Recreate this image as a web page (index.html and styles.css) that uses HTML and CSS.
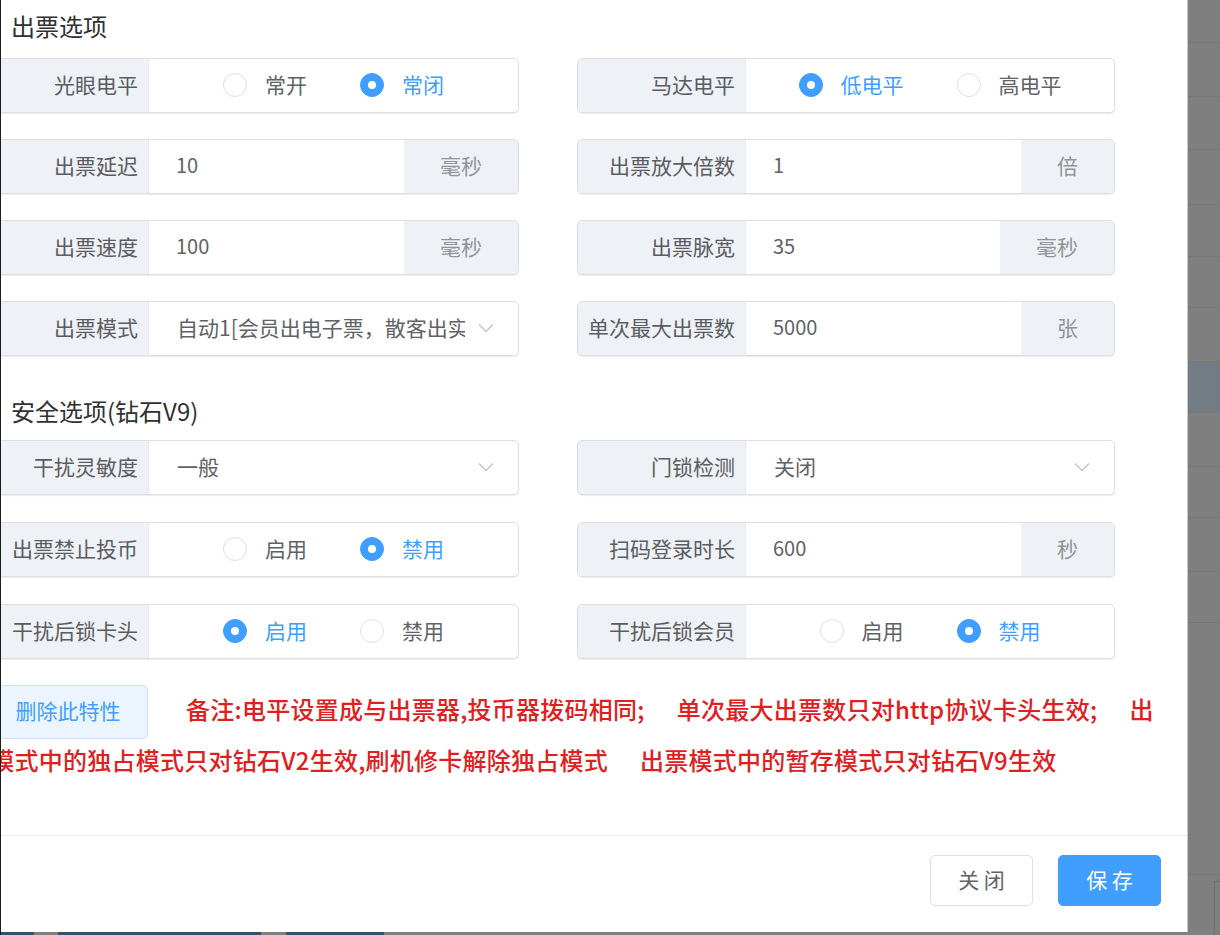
FILE: index.html
```html
<!DOCTYPE html>
<html lang="zh-CN">
<head>
<meta charset="utf-8">
<title>出票选项</title>
<link rel="stylesheet" href="styles.css">
</head>
<body>
<div class="screen">
  <div class="left">
    <div class="dialog">
      <div class="dialog-body">
        <h3 class="section-title">出票选项</h3>
        <div class="form-grid grid-a">
          <div class="field">
            <div class="label">光眼电平</div>
            <div class="control radios">
              <span class="radio"><span class="dot"></span><span>常开</span></span>
              <span class="radio checked"><span class="dot"></span><span>常闭</span></span>
            </div>
          </div>
          <div class="field">
            <div class="label">马达电平</div>
            <div class="control radios">
              <span class="radio checked"><span class="dot"></span><span>低电平</span></span>
              <span class="radio"><span class="dot"></span><span>高电平</span></span>
            </div>
          </div>
          <div class="field">
            <div class="label">出票延迟</div>
            <div class="control input">10</div>
            <div class="append">毫秒</div>
          </div>
          <div class="field">
            <div class="label">出票放大倍数</div>
            <div class="control input">1</div>
            <div class="append">倍</div>
          </div>
          <div class="field">
            <div class="label">出票速度</div>
            <div class="control input">100</div>
            <div class="append">毫秒</div>
          </div>
          <div class="field">
            <div class="label">出票脉宽</div>
            <div class="control input">35</div>
            <div class="append">毫秒</div>
          </div>
          <div class="field">
            <div class="label">出票模式</div>
            <div class="control select">
              <span class="select-text">自动1[会员出电子票，散客出实体票]</span>
              <svg class="chevron" width="16" height="10" viewBox="0 0 16 10"><polyline points="1,1.5 8,8.5 15,1.5" fill="none" stroke="#c0c4cc" stroke-width="1.3"/></svg>
            </div>
          </div>
          <div class="field">
            <div class="label">单次最大出票数</div>
            <div class="control input">5000</div>
            <div class="append">张</div>
          </div>
        </div>

        <h3 class="section-title second">安全选项(钻石V9)</h3>
        <div class="form-grid grid-b">
          <div class="field">
            <div class="label">干扰灵敏度</div>
            <div class="control select">
              <span class="select-text">一般</span>
              <svg class="chevron" width="16" height="10" viewBox="0 0 16 10"><polyline points="1,1.5 8,8.5 15,1.5" fill="none" stroke="#c0c4cc" stroke-width="1.3"/></svg>
            </div>
          </div>
          <div class="field">
            <div class="label">门锁检测</div>
            <div class="control select">
              <span class="select-text">关闭</span>
              <svg class="chevron" width="16" height="10" viewBox="0 0 16 10"><polyline points="1,1.5 8,8.5 15,1.5" fill="none" stroke="#c0c4cc" stroke-width="1.3"/></svg>
            </div>
          </div>
          <div class="field">
            <div class="label">出票禁止投币</div>
            <div class="control radios">
              <span class="radio"><span class="dot"></span><span>启用</span></span>
              <span class="radio checked"><span class="dot"></span><span>禁用</span></span>
            </div>
          </div>
          <div class="field">
            <div class="label">扫码登录时长</div>
            <div class="control input">600</div>
            <div class="append">秒</div>
          </div>
          <div class="field">
            <div class="label">干扰后锁卡头</div>
            <div class="control radios">
              <span class="radio checked"><span class="dot"></span><span>启用</span></span>
              <span class="radio"><span class="dot"></span><span>禁用</span></span>
            </div>
          </div>
          <div class="field">
            <div class="label">干扰后锁会员</div>
            <div class="control radios">
              <span class="radio"><span class="dot"></span><span>启用</span></span>
              <span class="radio checked"><span class="dot"></span><span>禁用</span></span>
            </div>
          </div>
        </div>

        <div class="note"><button class="btn-plain-primary">删除此特性</button><span class="note-text">备注:电平设置成与出票器,投币器拨码相同;<span class="sp"></span>单次最大出票数只对http协议卡头生效;<span class="sp"></span>出票模式中的独占模式只对钻石V2生效,刷机修卡解除独占模式<span class="sp"></span>出票模式中的暂存模式只对钻石V9生效</span></div>
      </div>
      <div class="dialog-footer">
        <button class="btn btn-default">关 闭</button>
        <button class="btn btn-primary">保 存</button>
      </div>
    </div>
    <div class="strip"></div>
  </div>
  <div class="backdrop">
    <div class="bg-row r43"></div>
    <div class="bg-row r54"></div>
    <div class="bg-row r53"></div>
    <div class="bg-row r55"></div>
    <div class="bg-row r52"></div>
    <div class="bg-row r51"></div>
    <div class="bg-row r54"></div>
    <div class="bg-row r51 active"></div>
    <div class="bg-row r54"></div>
    <div class="bg-row r51"></div>
    <div class="bg-row r54"></div>
    <div class="bg-row r51"></div>
    <div class="bg-row rfill"></div>
    <div class="bg-pager"><span class="pager-box"></span></div>
  </div>
</div>
</body>
</html>
```

FILE: styles.css
```css
* {
  box-sizing: border-box;
}

html, body {
  margin: 0;
  padding: 0;
  width: 1220px;
  height: 935px;
  overflow: hidden;
  background: #808080;
  font-family: "Noto Sans CJK SC", "Noto Sans", sans-serif;
}

.screen {
  display: flex;
  height: 935px;
  border-left: 1px solid #1c1c1c;
}

.left {
  width: 1187px;
  flex: none;
  display: flex;
  flex-direction: column;
}

.dialog {
  height: 932px;
  background: #fff;
  display: flex;
  flex-direction: column;
  overflow: hidden;
  border-right: 1px solid #c9c9c9;
}

.dialog-body {
  flex: 1;
  padding-top: 11px;
  overflow: hidden;
}

.section-title {
  margin: 0 0 17px 0;
  padding-left: 10px;
  height: 30px;
  line-height: 30px;
  font-size: 24px;
  font-weight: normal;
  color: #303133;
}

.section-title.second {
  margin-top: 40px;
  margin-bottom: 14px;
}

.form-grid {
  display: grid;
  grid-template-columns: 539px 538px;
  grid-auto-rows: 55px;
  column-gap: 58px;
  margin-left: -21px;
}

.grid-a {
  row-gap: 26px;
}

.grid-b {
  row-gap: 27px;
}

.field {
  display: flex;
  border: 1px solid #dcdfe6;
  border-radius: 5px;
  overflow: hidden;
  background: #fff;
  box-shadow: 0 1px 1px rgba(0, 0, 0, 0.08);
  font-size: 21px;
}

.label {
  width: 168px;
  flex: none;
  background: #eef1f6;
  border-right: 1px solid #e4e7ed;
  display: flex;
  align-items: center;
  justify-content: flex-end;
  padding-right: 10px;
  padding-bottom: 4px;
  color: #5a5c61;
  white-space: nowrap;
}

.control {
  flex: 1;
  min-width: 0;
  display: flex;
  align-items: center;
  padding-bottom: 4px;
  color: #606266;
}

.radios {
  justify-content: center;
  gap: 53px;
}

.radio {
  display: flex;
  align-items: center;
  gap: 18px;
  color: #606266;
}

.radio .dot {
  width: 24px;
  height: 24px;
  border-radius: 50%;
  border: 1px solid #dcdfe6;
  background: #fff;
  display: flex;
  align-items: center;
  justify-content: center;
  margin-top: 2px;
}

.radio.checked {
  color: #409eff;
}

.radio.checked .dot {
  background: #409eff;
  border-color: #409eff;
}

.radio.checked .dot::after {
  content: "";
  width: 8px;
  height: 8px;
  border-radius: 50%;
  background: #fff;
}

.input {
  padding-left: 27px;
  font-size: 20px;
}

.append {
  flex: none;
  padding: 0 36px 4px;
  background: #eef1f6;
  color: #909399;
  display: flex;
  align-items: center;
  justify-content: center;
}

.select {
  padding-left: 28px;
  padding-right: 24px;
}

.select-text {
  flex: 1;
  min-width: 0;
  overflow: hidden;
  white-space: nowrap;
}

.chevron {
  flex: none;
  margin-left: 13px;
  margin-top: 3px;
}

.note {
  margin-top: 26px;
  margin-left: -35px;
  width: 1199px;
  line-height: 42px;
  font-size: 24px;
  font-weight: 500;
  letter-spacing: 0.25px;
  color: #e0201f;
}

.btn-plain-primary {
  display: inline-block;
  vertical-align: middle;
  width: 160px;
  height: 54px;
  margin-left: 22px;
  margin-right: 38px;
  background: #ecf5ff;
  border: 1px solid #c6e2ff;
  border-radius: 5px;
  color: #409eff;
  font-family: inherit;
  font-size: 21px;
  font-weight: normal;
  letter-spacing: 0;
  line-height: 28px;
  padding: 0 0 4px;
}

.sp {
  display: inline-block;
  width: 32px;
}

.dialog-footer {
  height: 97px;
  flex: none;
  border-top: 1px solid #ebeef5;
  display: flex;
  justify-content: flex-end;
  align-items: flex-start;
  gap: 25px;
  padding: 19px 26px 0 0;
}

.btn {
  width: 103px;
  height: 51px;
  border-radius: 5px;
  font-family: inherit;
  font-size: 21px;
  line-height: 28px;
  padding: 0 0 4px;
}

.btn-default {
  background: #fff;
  border: 1px solid #dcdfe6;
  color: #606266;
}

.btn-primary {
  background: #409eff;
  border: 1px solid #409eff;
  color: #fff;
}

.strip {
  flex: 1;
  background: linear-gradient(to right,
    #35506f 0, #35506f 33px,
    #7f7f7f 33px, #7f7f7f 57px,
    #35506f 57px, #35506f 260px,
    #7f7f7f 260px, #7f7f7f 285px,
    #35506f 285px, #35506f 383px,
    #7f7f7f 383px);
}

.backdrop {
  flex: 1;
  display: flex;
  flex-direction: column;
  background: #7f7f7f;
}

.bg-row {
  flex: none;
  border-bottom: 1px solid #777;
}

.r43 { height: 43px; }
.r51 { height: 51px; }
.r52 { height: 52px; }
.r53 { height: 53px; }
.r54 { height: 54px; }
.r55 { height: 55px; }
.rfill { height: 252px; }

.bg-row.active {
  background: #737b85;
}

.bg-pager {
  flex: 1;
  display: flex;
  justify-content: flex-end;
  padding-top: 6px;
}

.pager-box {
  width: 6px;
  border-left: 1px solid #6c6c6c;
  border-top: 1px solid #6c6c6c;
}
```
